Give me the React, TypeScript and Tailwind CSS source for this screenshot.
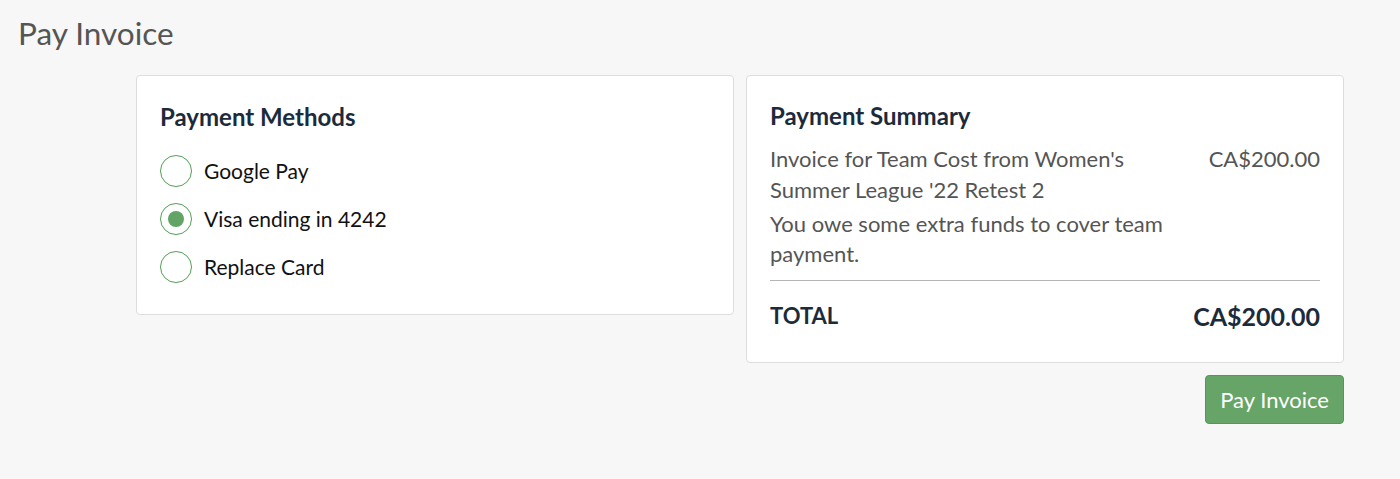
import React, { useState } from 'react';

const METHODS = ['Google Pay', 'Visa ending in 4242', 'Replace Card'];

function Radio({ checked }: { checked: boolean }) {
  return (
    <span className="w-8 h-8 rounded-full border-[1.5px] border-[#52a055] bg-white flex items-center justify-center shrink-0">
      {checked && <span className="w-4 h-4 rounded-full bg-[#62a465]" />}
    </span>
  );
}

export default function App() {
  const [method, setMethod] = useState(1);

  return (
    <div className="min-h-screen bg-[#f7f7f7] font-['Lato','Liberation_Sans',sans-serif]">
      <h1 className="pl-[18px] pt-[13px] text-[31.5px] leading-[40px] text-[#555555]">Pay Invoice</h1>

      <div className="grid grid-cols-2 items-start gap-3 ml-[136px] mr-[56px] mt-[22px]">
        {/* Payment methods */}
        <div className="bg-white border border-[#dddddd] rounded-[4px] px-[23px] pt-[26px] pb-[31px]">
          <h2 className="text-[24px] leading-[30px] font-bold text-[#1c2b3c]">Payment Methods</h2>
          <div className="mt-[23px] flex flex-col gap-4">
            {METHODS.map((m, idx) => (
              <button key={m} onClick={() => setMethod(idx)} className="flex items-center gap-3 text-left">
                <Radio checked={method === idx} />
                <span className="text-[21px] leading-8 text-[#111111]">{m}</span>
              </button>
            ))}
          </div>
        </div>

        {/* Summary + button */}
        <div className="flex flex-col">
          <div className="bg-white border border-[#dddddd] rounded-[4px] px-[23px] pt-[25px] pb-[31px]">
            <h2 className="text-[24px] leading-[30px] font-bold text-[#1c2b3c]">Payment Summary</h2>
            <div className="mt-[12px] flex justify-between text-[22px] text-[#555555]">
              <div className="w-[395px]">
                <p className="leading-[31px]">Invoice for Team Cost from Women's Summer League '22 Retest 2</p>
                <p className="mt-[4px] leading-[30px]">You owe some extra funds to cover team payment.</p>
              </div>
              <span className="leading-[31px]">CA$200.00</span>
            </div>
            <div className="mt-[11px] border-t border-[#b5b5b5]" />
            <div className="mt-[20px] flex justify-between items-center text-[#1c2b3c] font-bold">
              <span className="text-[22px] leading-[30px]">TOTAL</span>
              <span className="text-[25px] leading-[30px]">CA$200.00</span>
            </div>
          </div>
          <button className="self-end mt-[12px] h-[49px] px-[14px] bg-[#66a468] border border-[#57955a] rounded-[4px] text-white text-[22px]">
            Pay Invoice
          </button>
        </div>
      </div>
    </div>
  );
}
